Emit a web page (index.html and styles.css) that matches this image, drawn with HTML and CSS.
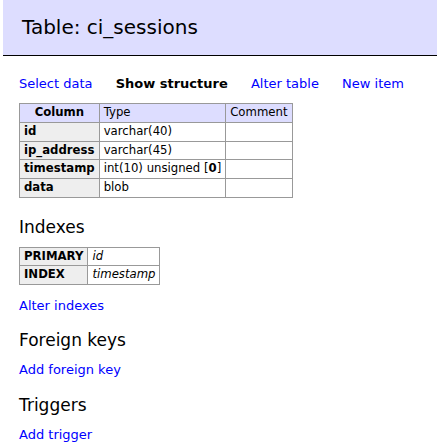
FILE: index.html
```html
<!DOCTYPE html>
<html>
<head>
<meta charset="utf-8">
<link rel="stylesheet" href="styles.css">
</head>
<body>
<div class="content">
  <h2 class="title">Table: ci_sessions</h2>
  <p class="links nav">
    <a href="#">Select data</a>
    <b>Show structure</b>
    <a href="#">Alter table</a>
    <a href="#">New item</a>
  </p>
  <table class="grid">
    <thead>
      <tr><th>Column</th><td>Type</td><td>Comment</td></tr>
    </thead>
    <tbody>
      <tr><th>id</th><td>varchar(40)</td><td></td></tr>
      <tr><th>ip_address</th><td>varchar(45)</td><td></td></tr>
      <tr><th>timestamp</th><td>int(10) unsigned [<b>0</b>]</td><td></td></tr>
      <tr><th>data</th><td>blob</td><td></td></tr>
    </tbody>
  </table>
  <h3 class="section first">Indexes</h3>
  <table class="grid index">
    <tbody>
      <tr><th>PRIMARY</th><td><i>id</i></td></tr>
      <tr><th>INDEX</th><td><i>timestamp</i></td></tr>
    </tbody>
  </table>
  <p class="links after-table"><a href="#">Alter indexes</a></p>
  <h3 class="section">Foreign keys</h3>
  <p class="links"><a href="#">Add foreign key</a></p>
  <h3 class="section">Triggers</h3>
  <p class="links"><a href="#">Add trigger</a></p>
</div>
</body>
</html>
```
FILE: styles.css
```css
body {
  margin: 0;
  color: #000;
  background: #fff;
  font: 13px/1.25 "DejaVu Sans", Verdana, sans-serif;
}
.content {
  padding: 0 0 20px 19px;
}
a {
  color: #00f;
  text-decoration: none;
}
.title {
  font-size: 20px;
  font-weight: normal;
  margin: 0 0 0 -16px;
  padding: 15px 19px;
  line-height: 25px;
  background: #ddf;
  border-bottom: 1px solid #000;
}
.links {
  margin: 11px 0 0;
}
.links.nav {
  margin-top: 20px;
}
.links.after-table {
  margin-top: 13px;
}
.links a, .links b {
  margin-right: 19px;
  white-space: nowrap;
}
.grid {
  margin: 11px 0 0;
  border-collapse: collapse;
  font-size: 11.7px;
}
.grid.index {
  margin-top: 9px;
}
.grid th, .grid td {
  border: 1px solid #999;
  padding: 1px 4px;
  line-height: 15.7px;
  text-align: left;
}
.grid th {
  background: #eee;
}
.grid thead th, .grid thead td {
  background: #ddf;
}
.grid thead td {
  padding-right: 5px;
}
.grid thead th {
  text-align: center;
  padding: 1px 7px;
}
.section {
  font-size: 17px;
  line-height: 21px;
  font-weight: normal;
  margin: 16px 0 0;
}
.section.first {
  margin-top: 19px;
}
```
